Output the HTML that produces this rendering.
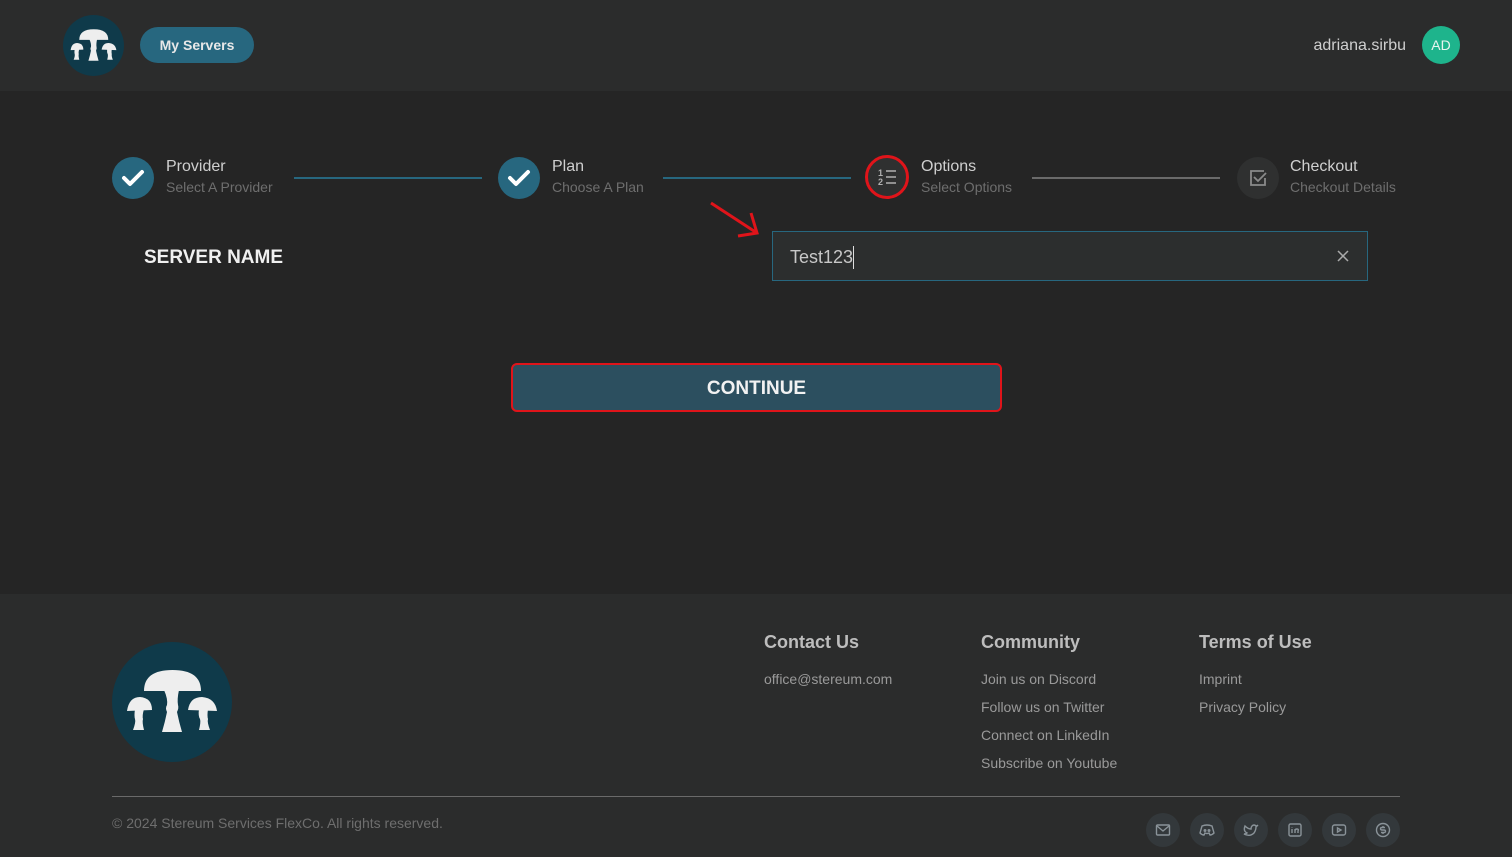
<!DOCTYPE html>
<html><head><meta charset="utf-8"><style>
*{box-sizing:border-box;margin:0;padding:0}
body{width:1512px;height:857px;background:#252525;font-family:"Liberation Sans",sans-serif;overflow:hidden;position:relative}
.hdr{position:absolute;left:0;top:0;width:1512px;height:91px;background:#2b2c2c}
.btn{position:absolute;left:140px;top:27px;width:114px;height:36px;border-radius:18px;background:#27677f;color:#e8e8e8;font-size:14px;font-weight:bold;text-align:center;line-height:36px}
.user{position:absolute;right:106px;top:37px;color:#cfcfcf;font-size:16px}
.av{position:absolute;left:1422px;top:26px;width:38px;height:38px;border-radius:50%;background:#1eb48c;color:#e8f5f0;font-size:14px;text-align:center;line-height:38px}
.circ{position:absolute;width:42px;height:42px;border-radius:50%;background:#27677f}
.t1{position:absolute;color:#cfcfcf;font-size:16px;white-space:nowrap}
.t2{position:absolute;color:#6e6e6e;font-size:14px;white-space:nowrap}
.line{position:absolute;top:177px;height:2px}
.lbl{position:absolute;left:144px;top:247px;color:#f0f0f0;font-size:19px;font-weight:bold}
.inp{position:absolute;left:772px;top:231px;width:596px;height:50px;border:1px solid #27677f;background:#2c2e2e}
.cont{position:absolute;left:511px;top:363px;width:491px;height:49px;border:2px solid #e0141a;border-radius:6px;background:#2c4f5f;color:#f2f2f2;font-size:19px;font-weight:bold;text-align:center;line-height:47px}
.ftr{position:absolute;left:0;top:594px;width:1512px;height:263px;background:#2b2c2c}
.fh{position:absolute;top:632px;color:#bdbdbd;font-size:18px;font-weight:bold}
.fl{position:absolute;color:#9a9a9a;font-size:14px}
.hr{position:absolute;left:112px;top:796px;width:1288px;height:1px;background:#6a6a6a}
.soc{position:absolute;top:813px;width:34px;height:34px;border-radius:50%;background:#33383b}
.soc svg{position:absolute;left:9px;top:9px}
</style></head><body>
<svg width="0" height="0" style="position:absolute"><defs><g id="m"><circle cx="60" cy="60" r="60" fill="#0f3a4a"/><g fill="#eeeeee"><path d="M32 49Q32 28 60.5 28Q89 28 89 49Z"/><path d="M52 48L67 48Q65 57 66 63Q67 66 65 70Q67 80 70 90L50 90Q53 80 55 70Q53 66 55 63Q56 57 52 48Z"/><path d="M15 69Q17 55 28 55Q40 56 40 68Z"/><path d="M23 67L32 67Q30 74 31 77Q30 80 32 88L21 88Q24 80 23 77Q22 74 23 67Z"/><path d="M76 68Q78 55 90 55Q103 56 105 69Z"/><path d="M87 67L96 67Q95 74 96 77Q95 80 98 88L87 88Q89 80 88 77Q86 74 87 67Z"/></g></g></defs></svg>
<div class="hdr"></div>
<svg style="position:absolute;left:63px;top:15px" width="61" height="61" viewBox="0 0 120 120"><use href="#m"/></svg>
<div class="btn">My Servers</div>
<div class="user">adriana.sirbu</div>
<div class="av">AD</div>

<div class="circ" style="left:112px;top:157px"></div>
<svg style="position:absolute;left:112px;top:157px" width="42" height="42"><path d="M12 21l6 6 12-12" stroke="#fff" stroke-width="4" fill="none" stroke-linecap="round" stroke-linejoin="round"/></svg>
<div class="t1" style="left:166px;top:158px">Provider</div>
<div class="t2" style="left:166px;top:179px">Select A Provider</div>
<div class="line" style="left:294px;width:188px;background:#27677f"></div>
<div class="circ" style="left:498px;top:157px"></div>
<svg style="position:absolute;left:498px;top:157px" width="42" height="42"><path d="M12 21l6 6 12-12" stroke="#fff" stroke-width="4" fill="none" stroke-linecap="round" stroke-linejoin="round"/></svg>
<div class="t1" style="left:552px;top:158px">Plan</div>
<div class="t2" style="left:552px;top:179px">Choose A Plan</div>
<div class="line" style="left:663px;width:188px;background:#27677f"></div>
<div class="circ" style="left:865px;top:155px;width:44px;height:44px;background:#2f3030;border:3px solid #e0141a"></div>
<svg style="position:absolute;left:865px;top:155px" width="44" height="44"><text x="13" y="21" font-size="9" fill="#b0b0b0" font-family="Liberation Sans" font-weight="bold">1</text><text x="13" y="30" font-size="9" fill="#b0b0b0" font-family="Liberation Sans" font-weight="bold">2</text><path d="M21 16h10M21 22h10M21 28h10" stroke="#b0b0b0" stroke-width="1.6"/></svg>
<div class="t1" style="left:921px;top:158px">Options</div>
<div class="t2" style="left:921px;top:179px">Select Options</div>
<div class="line" style="left:1032px;width:188px;background:#6a6a6a"></div>
<div class="circ" style="left:1237px;top:157px;background:#2f3030"></div>
<svg style="position:absolute;left:1237px;top:157px" width="42" height="42"><path d="M27 14h-13v14h14v-7" stroke="#8a8a8a" stroke-width="1.8" fill="none"/><path d="M17 20l4 4 8-8" stroke="#8a8a8a" stroke-width="1.8" fill="none"/></svg>
<div class="t1" style="left:1290px;top:158px">Checkout</div>
<div class="t2" style="left:1290px;top:179px">Checkout Details</div>

<svg style="position:absolute;left:705px;top:198px" width="60" height="42"><path d="M6 5L52 35M46 15l6 20-19 3" stroke="#e0141a" stroke-width="3" fill="none"/></svg>
<div class="lbl">SERVER NAME</div>
<div class="inp"><span style="position:absolute;left:17px;top:15px;color:#c8c8c8;font-size:18px">Test123</span><span style="position:absolute;left:80px;top:14px;width:1px;height:23px;background:#ddd"></span>
<svg style="position:absolute;left:563px;top:17px" width="14" height="14"><path d="M2 2l10 10M12 2L2 12" stroke="#aaa" stroke-width="1.5"/></svg></div>
<div class="cont">CONTINUE</div>

<div class="ftr"></div>
<svg style="position:absolute;left:112px;top:642px" width="120" height="120" viewBox="0 0 120 120"><use href="#m"/></svg>
<div class="fh" style="left:764px">Contact Us</div>
<div class="fl" style="left:764px;top:671px">office@stereum.com</div>
<div class="fh" style="left:981px">Community</div>
<div class="fl" style="left:981px;top:671px">Join us on Discord</div>
<div class="fl" style="left:981px;top:699px">Follow us on Twitter</div>
<div class="fl" style="left:981px;top:727px">Connect on LinkedIn</div>
<div class="fl" style="left:981px;top:755px">Subscribe on Youtube</div>
<div class="fh" style="left:1199px">Terms of Use</div>
<div class="fl" style="left:1199px;top:671px">Imprint</div>
<div class="fl" style="left:1199px;top:699px">Privacy Policy</div>
<div class="hr"></div>
<div class="fl" style="left:112px;top:815px;color:#6e6e6e">© 2024 Stereum Services FlexCo. All rights reserved.</div>
<div class="soc" style="left:1146px"><svg width="16" height="16" fill="none" stroke="#8a9399" stroke-width="1.4"><rect x="1.5" y="3" width="13" height="10" rx="1"/><path d="M2 4l6 5 6-5"/></svg></div>
<div class="soc" style="left:1190px"><svg width="16" height="16" fill="none" stroke="#8a9399" stroke-width="1.4"><path d="M3 4q5-2 10 0l2 7q-2 2-4 2l-1-2q-2 1-4 0l-1 2q-2 0-4-2z"/><circle cx="6" cy="8.5" r=".8"/><circle cx="10" cy="8.5" r=".8"/></svg></div>
<div class="soc" style="left:1234px"><svg width="16" height="16" fill="none" stroke="#8a9399" stroke-width="1.4"><path d="M15 3q-1 1-2 1-2-2-4 0-1 1-1 3-3 0-6-3-2 5 2 7-1 1-3 1 6 3 10-1 2-3 2-6z"/></svg></div>
<div class="soc" style="left:1278px"><svg width="16" height="16" fill="none" stroke="#8a9399" stroke-width="1.4"><rect x="2" y="2" width="12" height="12" rx="1.5"/><path d="M5 7v4M5 5v.5M8 11V7M8 9q0-2 2-2t1 2v2"/></svg></div>
<div class="soc" style="left:1322px"><svg width="16" height="16" fill="none" stroke="#8a9399" stroke-width="1.4"><rect x="1.5" y="3" width="13" height="10" rx="2"/><path d="M6.5 6v4l3.5-2z"/></svg></div>
<div class="soc" style="left:1366px"><svg width="16" height="16" fill="none" stroke="#8a9399" stroke-width="1.4"><circle cx="8" cy="8" r="6.5"/><path d="M10 5.5H7q-1.5 0-1.5 1.2T7 8h2q1.5 0 1.5 1.3T9 10.5H6M8 4v1.5M8 10.5V12"/></svg></div>
</body></html>
